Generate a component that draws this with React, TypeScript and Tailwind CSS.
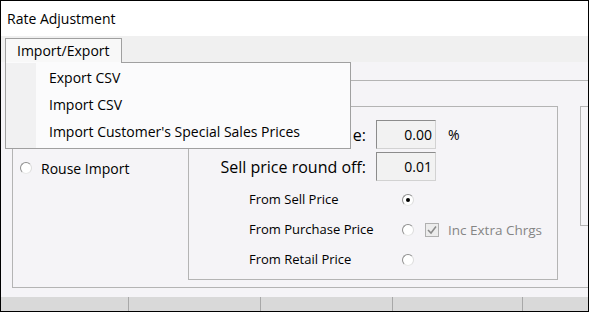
function Radio({ checked = false }: { checked?: boolean }) {
  return (
    <span className="w-[12px] h-[12px] rounded-full border border-[#8e8e8e] border-r-[#dcdcdc] border-b-[#e8e8e8] bg-white flex items-center justify-center shrink-0">
      {checked && <span className="w-[4px] h-[4px] rounded-full bg-black" />}
    </span>
  );
}

function Field({ value }: { value: string }) {
  return (
    <div className="w-[60px] h-[29px] border border-[#8c8c8c] border-r-[#d2d2d2] border-b-[#d2d2d2] bg-[#f2f2f2] flex items-center justify-end pr-[3px] text-[14px]">
      {value}
    </div>
  );
}

const MENU_ITEMS = ["Export CSV", "Import CSV", "Import Customer's Special Sales Prices"];

const FROM_OPTIONS = [
  { label: "From Sell Price", checked: true, extra: false },
  { label: "From Purchase Price", checked: false, extra: true },
  { label: "From Retail Price", checked: false, extra: false },
];

export default function App() {
  return (
    <div className="w-[589px] h-[312px] border border-black bg-[#f5f4f7] flex flex-col relative overflow-hidden font-['Open_Sans',sans-serif] text-black">
      {/* Title */}
      <div className="h-[35px] shrink-0 bg-white flex items-center pl-[6px] text-[14px]">
        Rate Adjustment
      </div>

      {/* Menu bar */}
      <div className="h-[26px] shrink-0 bg-[#f0f0f0] flex items-end pl-[4px]">
        <div className="h-[24px] w-[117px] border border-b-0 border-[#a0a0a0] bg-[#f8f8f8] flex items-center pl-[11px] text-[14px]">
          Import/Export
        </div>
      </div>

      {/* Tab page */}
      <div className="flex-1 pt-[18px] pl-[11px]">
        <div className="h-[208px] border-t border-l border-b border-[#b4b4b4] flex">
          <div className="w-[175px] shrink-0 pt-[77px] pl-[7px]">
            <div className="h-[20px] flex items-center gap-[9px] text-[14px]">
              <Radio />
              <span>Rouse Import</span>
            </div>
          </div>

          <div className="mt-[25px] w-[370px] h-[174px] shrink-0 border border-[#b4b4b4] flex flex-col pt-[13px]">
            <div className="flex items-center">
              <span className="w-[178px] text-right text-[16px] pr-[1px] overflow-hidden whitespace-nowrap">e:</span>
              <span className="ml-[9px]"><Field value="0.00" /></span>
              <span className="ml-[12px] text-[14px]">%</span>
            </div>
            <div className="flex items-center mt-[3px]">
              <span className="w-[178px] text-right text-[16px] pr-[1px] whitespace-nowrap">Sell price round off:</span>
              <span className="ml-[9px]"><Field value="0.01" /></span>
            </div>
            <div className="mt-[4px] flex flex-col">
              {FROM_OPTIONS.map((o) => (
                <div key={o.label} className="h-[30px] flex items-center pl-[60px] text-[13px]">
                  <span className="w-[153px]">{o.label}</span>
                  <Radio checked={o.checked} />
                  {o.extra && (
                    <>
                      <span className="ml-[11px] w-[14px] h-[14px] border border-[#b0b0b0] bg-[#ececec] flex items-center justify-center">
                        <svg width="10" height="10" viewBox="0 0 10 10">
                          <path d="M1 5 L4 8 L9 1.5" fill="none" stroke="#8a8a8a" strokeWidth="1.5" />
                        </svg>
                      </span>
                      <span className="ml-[9px] text-[13.5px] text-[#858585]">Inc Extra Chrgs</span>
                    </>
                  )}
                </div>
              ))}
            </div>
          </div>

          <div className="ml-[22px] mt-[25px] w-[40px] h-[120px] shrink-0 border-t border-l border-b border-[#b4b4b4]" />
        </div>
      </div>

      {/* Status bar */}
      <div className="h-[14px] shrink-0 bg-[#d9d9d9] flex">
        <div className="w-[128px] border-r border-[#a8a8a8]" />
        <div className="w-[132px] border-r border-[#a8a8a8]" />
        <div className="w-[132px] border-r border-[#a8a8a8]" />
        <div className="w-[130px] border-r border-[#a8a8a8]" />
      </div>

      {/* Dropdown menu */}
      <div className="absolute left-[4px] top-[61px] w-[346px] h-[87px] border border-t-0 border-[#a0a0a0] bg-[#fbfbfc] flex flex-col">
        <div className="h-px ml-[115px] bg-[#a0a0a0] shrink-0" />
        <div className="flex flex-1">
          <div className="w-[30px] bg-[#f1f1f2]" />
          <div className="flex flex-col pt-[1px] pl-[13px]">
            {MENU_ITEMS.map((item) => (
              <div key={item} className="h-[27px] flex items-center text-[14px]">
                {item}
              </div>
            ))}
          </div>
        </div>
      </div>
    </div>
  );
}
